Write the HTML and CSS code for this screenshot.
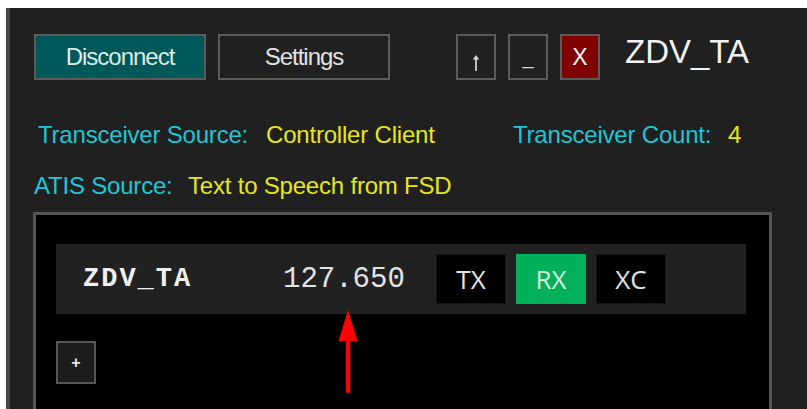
FILE: index.html
```html
<!DOCTYPE html>
<html>
<head>
<meta charset="utf-8">
<link rel="stylesheet" href="styles.css">
</head>
<body>
<div class="window">
  <div class="toolbar">
    <button class="btn btn-primary">Disconnect</button>
    <button class="btn">Settings</button>
    <div class="winbtns">
      <button class="wbtn wbtn-up" aria-label="Up">
        <svg width="8" height="17" viewBox="0 0 8 17">
          <path d="M4 1 L7.2 5.5 H0.8 Z" fill="#d8d8d8"/>
          <rect x="3.15" y="4.5" width="1.7" height="12.5" fill="#d8d8d8"/>
        </svg>
      </button>
      <button class="wbtn wbtn-min">_</button>
      <button class="wbtn wbtn-close">X</button>
    </div>
    <div class="title">ZDV_TA</div>
  </div>

  <div class="info">
    <div class="row">
      <span class="lbl lbl-src">Transceiver Source:</span>
      <span class="val val-src">Controller Client</span>
      <span class="lbl lbl-count">Transceiver Count:</span>
      <span class="val">4</span>
    </div>
    <div class="row row-atis">
      <span class="lbl lbl-atis">ATIS Source:</span>
      <span class="val">Text to Speech from FSD</span>
    </div>
  </div>

  <div class="panel">
    <div class="station">
      <span class="callsign">ZDV_TA</span>
      <span class="freq">127.650</span>
      <button class="mode">TX</button>
      <button class="mode mode-on">RX</button>
      <button class="mode">XC</button>
    </div>
    <button class="add">+</button>
    <svg class="pointer" width="20" height="84" viewBox="0 0 20 84">
      <polygon points="10,0 19.5,31 0.5,31" fill="#ff0000"/>
      <rect x="7.8" y="28" width="4.4" height="55" rx="2" fill="#ff0000"/>
    </svg>
  </div>
</div>
</body>
</html>
```

FILE: styles.css
```css
html, body {
  margin: 0;
  padding: 0;
  background: #ffffff;
}

body {
  font-family: "Liberation Sans", Arial, sans-serif;
}

.window {
  margin: 8px 0 0 6px;
  height: 401px;
  box-sizing: border-box;
  border-left: 4px solid #474747;
  background: #202020;
  padding: 26px 0 0 24px;
  overflow: hidden;
}

button {
  font-family: inherit;
  padding: 0;
  cursor: pointer;
}

/* top bar */
.toolbar {
  display: flex;
  align-items: center;
  height: 46px;
}

.btn {
  width: 172px;
  height: 46px;
  box-sizing: border-box;
  border: 2px solid #5b5b5b;
  background: #202020;
  color: #e2e2e2;
  font-size: 24px;
  letter-spacing: -1px;
  margin-right: 12px;
}

.btn-primary {
  background: #005858;
  color: #dcecec;
}

.winbtns {
  display: flex;
  gap: 12px;
  margin-left: 54px;
}

.wbtn {
  width: 40px;
  height: 46px;
  box-sizing: border-box;
  border: 2px solid #5b5b5b;
  background: #202020;
  color: #d8d8d8;
  font-size: 20px;
  line-height: 44px;
}

.wbtn-up {
  display: flex;
  justify-content: center;
  align-items: flex-end;
  padding-bottom: 7px;
}

.wbtn-up svg {
  display: block;
}

.wbtn-min {
  font-size: 20px;
  line-height: 36px;
}

.wbtn-close {
  background: #800000;
  color: #f4f4f4;
  font-size: 23px;
  line-height: 42px;
}

.title {
  margin-left: 25px;
  margin-bottom: 10px;
  color: #f2f2f2;
  font-size: 33px;
}

/* source info */
.info {
  margin-top: 42px;
}

.row {
  display: flex;
  height: 26px;
  line-height: 26px;
  font-size: 24px;
  letter-spacing: -0.2px;
  padding-left: 4px;
}

.row-atis {
  margin-top: 25px;
  padding-left: 0;
}

.lbl {
  color: #1fc6d6;
}

.val {
  color: #e6e61e;
}

.lbl-src { width: 228px; }
.val-src { width: 247px; }
.lbl-count { width: 215px; }
.lbl-atis { width: 154px; }

/* transceiver panel */
.panel {
  position: relative;
  margin: 13px 0 0 -1px;
  width: 739px;
  height: 200px;
  box-sizing: border-box;
  border: 3px solid #555555;
  background: #000000;
  padding: 29px 23px 0 20px;
}

.station {
  display: flex;
  align-items: center;
  height: 70px;
  background: #212121;
  padding-left: 27px;
}

.callsign {
  width: 200px;
  font-family: "Liberation Mono", "Courier New", monospace;
  font-weight: bold;
  font-size: 27px;
  letter-spacing: 2px;
  color: #f0f0f0;
}

.freq {
  width: 153px;
  font-family: "Liberation Mono", "Courier New", monospace;
  font-size: 29px;
  color: #e4e4e4;
}

.mode {
  width: 70px;
  height: 50px;
  margin-right: 10px;
  border: 1px solid #141414;
  background: #000000;
  color: #e4e4e4;
  font-family: "Open Sans", sans-serif;
  font-size: 26px;
}

.mode-on {
  background: #00b159;
  border-color: #00b159;
  color: #d6f2e0;
}

.add {
  display: block;
  margin-top: 27px;
  width: 40px;
  height: 43px;
  box-sizing: border-box;
  border: 2px solid #565656;
  background: #1c1c1c;
  color: #e8e8e8;
  font-weight: bold;
  font-size: 16px;
}

.pointer {
  position: absolute;
  left: 302px;
  top: 95px;
}
```
